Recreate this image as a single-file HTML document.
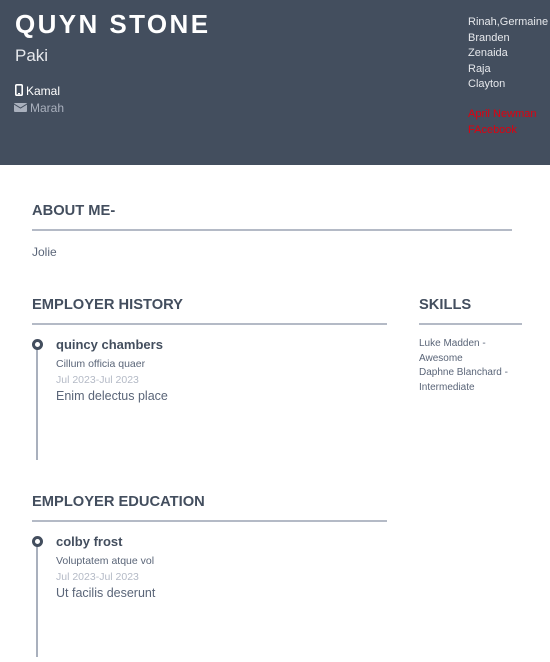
<!DOCTYPE html>
<html><head><style>
*{margin:0;padding:0;box-sizing:border-box}
body{width:550px;height:662px;background:#fff;font-family:"Liberation Sans",sans-serif;position:relative;overflow:hidden;color:#434e5e}
.a{position:absolute;white-space:nowrap}
.hdr{position:absolute;left:0;top:0;width:550px;height:165px;background:#434e5e}
h2{position:absolute;font-size:14.7px;font-weight:bold;color:#434e5e}
.hr{position:absolute;height:2px;background:#b4bac6}
.vl{position:absolute;left:36px;width:2px;background:#a9b0bd}
.dot{position:absolute;left:32px;width:11px;height:11px;border:3px solid #434e5e;border-radius:50%;background:#fff}
</style></head><body>
<div class="hdr"></div>
<div class="a" style="left:15px;top:9px;font-size:26px;font-weight:bold;letter-spacing:2.4px;color:#fff">QUYN STONE</div>
<div class="a" style="left:15px;top:46px;font-size:17px;color:#e6e8ec">Paki</div>
<svg class="a" style="left:15px;top:84px" width="8" height="12" viewBox="0 0 8 12"><rect x="0.8" y="0.8" width="6.4" height="10.4" rx="1" fill="none" stroke="#fff" stroke-width="1.6"/><rect x="3" y="9" width="2" height="1.2" fill="#fff"/></svg>
<div class="a" style="left:26px;top:84px;font-size:12px;color:#fff">Kamal</div>
<svg class="a" style="left:14px;top:103px" width="13" height="9" viewBox="0 0 13 9"><rect width="13" height="9" rx="1" fill="#a9b0bd"/><path d="M0 1l6.5 4L13 1" fill="none" stroke="#434e5e" stroke-width="1"/></svg>
<div class="a" style="left:30px;top:101px;font-size:12px;color:#a9b0bd">Marah</div>
<div class="a" style="left:468px;top:15px;font-size:11px;line-height:15.5px;color:#e6e8ec">Rinah,Germaine<br>Branden<br>Zenaida<br>Raja<br>Clayton</div>
<div class="a" style="left:468px;top:107px;font-size:11px;line-height:15.5px;color:#e0000f">April Newman<br>FAcebook</div>

<h2 style="left:32px;top:203px">ABOUT ME-</h2>
<div class="hr" style="left:32px;top:229px;width:480px"></div>
<div class="a" style="left:32px;top:245px;font-size:12px;color:#5a6578">Jolie</div>

<h2 style="left:32px;top:297px">EMPLOYER HISTORY</h2>
<div class="hr" style="left:32px;top:323px;width:355px"></div>
<div class="vl" style="top:345px;height:115px"></div>
<div class="dot" style="top:339px"></div>
<div class="a" style="left:56px;top:337px;font-size:13px;font-weight:bold">quincy chambers</div>
<div class="a" style="left:56px;top:358px;font-size:10.5px;color:#5a6578">Cillum officia quaer</div>
<div class="a" style="left:56px;top:374px;font-size:10.5px;color:#b4bac6">Jul 2023-Jul 2023</div>
<div class="a" style="left:56px;top:389px;font-size:12.5px;color:#5a6578">Enim delectus place</div>

<h2 style="left:419px;top:297px">SKILLS</h2>
<div class="hr" style="left:419px;top:323px;width:103px"></div>
<div class="a" style="left:419px;top:337px;font-size:10px;line-height:14.5px;color:#5a6578">Luke Madden -<br>Awesome<br>Daphne Blanchard -<br>Intermediate</div>

<h2 style="left:32px;top:494px">EMPLOYER EDUCATION</h2>
<div class="hr" style="left:32px;top:520px;width:355px"></div>
<div class="vl" style="top:542px;height:115px"></div>
<div class="dot" style="top:536px"></div>
<div class="a" style="left:56px;top:534px;font-size:13px;font-weight:bold">colby frost</div>
<div class="a" style="left:56px;top:555px;font-size:10.5px;color:#5a6578">Voluptatem atque vol</div>
<div class="a" style="left:56px;top:571px;font-size:10.5px;color:#b4bac6">Jul 2023-Jul 2023</div>
<div class="a" style="left:56px;top:586px;font-size:12.5px;color:#5a6578">Ut facilis deserunt</div>
</body></html>
